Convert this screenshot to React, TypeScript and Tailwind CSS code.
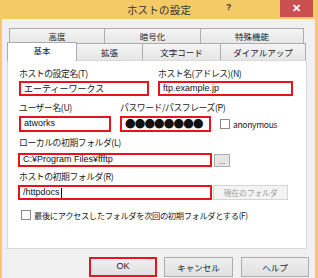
const jp = "font-['Meiryo_UI','Noto_Sans_CJK_JP',sans-serif]";

function Field({ children, className = "" }: { children?: React.ReactNode; className?: string }) {
  return (
    <div
      className={`border-2 border-[#e8141c] bg-white flex items-center pl-[3px] text-[9px] text-[#111] font-['Liberation_Sans','Noto_Sans_CJK_JP',sans-serif] ${className}`}
    >
      {children}
    </div>
  );
}

function Label({ children }: { children: React.ReactNode }) {
  return <div className="h-[12px] leading-[12px] text-[8.8px] tracking-[-0.4px] text-[#222]">{children}</div>;
}

function Checkbox() {
  return <div className="w-[10px] h-[10px] border border-[#8a8a8a] bg-white shrink-0" />;
}

export default function App() {
  return (
    <div className={`w-[318px] h-[278px] overflow-hidden bg-[#f3ca66] flex flex-col ${jp}`}>
      {/* title bar */}
      <div className="h-[19px] shrink-0 grid grid-cols-[1fr_auto_1fr]">
        <div />
        <div className="text-[10.5px] leading-[19px] text-[#333] tracking-[0.2px]">ホストの設定</div>
        <div className="flex justify-end items-start pr-[5px]">
          <div className="w-[8px] mt-[2px] text-[9px] leading-[10px] font-bold text-[#333] font-['Liberation_Sans',sans-serif]">?</div>
          <div className="w-[46px]" />
          <div className="w-[33px] h-[17px] bg-[#c9504f] flex items-center justify-center text-white text-[11px] font-bold font-['Liberation_Sans',sans-serif]">
            ✕
          </div>
        </div>
      </div>

      {/* client area */}
      <div className="flex-1 ml-[2px] mr-[3px] bg-[#f0f0f0] pt-[9px] pl-[5px] text-[#222]">
        {/* back tab row */}
        <div className="flex ml-[2px] h-[15px] text-[8.5px]">
          {[
            ["高度", "w-[96px]"],
            ["暗号化", "w-[97px]"],
            ["特殊機能", "w-[104px]"],
          ].map(([t, w]) => (
            <div
              key={t}
              className={`${w} h-[15px] border-t border-l border-r border-[#acacac] -mr-px bg-gradient-to-b from-[#f4f4f4] to-[#e6e6e6] flex items-center justify-center leading-none`}
            >
              {t}
            </div>
          ))}
        </div>
        {/* front tab row */}
        <div className="flex items-end h-[17px] text-[8.5px] relative z-10">
          <div className="w-[70px] h-[19px] -mb-px bg-white border-t border-l border-r border-[#acacac] flex items-start pt-[3px] justify-center leading-none">
            基本
          </div>
          {[
            ["拡張", "w-[66px]"],
            ["文字コード", "w-[78px]"],
            ["ダイアルアップ", "w-[85px]"],
          ].map(([t, w]) => (
            <div
              key={t}
              className={`${w} h-[17px] border-t border-r border-[#acacac] bg-gradient-to-b from-[#f4f4f4] to-[#e6e6e6] flex items-center justify-center leading-none`}
            >
              {t}
            </div>
          ))}
        </div>

        {/* panel */}
        <div className="w-[300px] h-[189px] border border-[#d9d9d9] bg-white pl-[11px] pt-[7px]">
          <div className="flex">
            <div className="w-[139px]">
              <Label>ホストの設定名(T)</Label>
              <Field className="w-[130px] h-[15px] mt-[1px] text-[8.5px] font-['Noto_Sans_CJK_JP',sans-serif]">エーティーワークス</Field>
            </div>
            <div className="mt-0">
              <Label>ホスト名(アドレス)(N)</Label>
              <Field className="w-[135px] h-[15px] mt-[1px]">ftp.example.jp</Field>
            </div>
          </div>

          <div className="flex mt-[6px]">
            <div className="w-[101px]">
              <Label>ユーザー名(U)</Label>
              <Field className="w-[92px] h-[16px] mt-[2px]">atworks</Field>
            </div>
            <div>
              <Label>パスワード/パスフレーズ(P)</Label>
              <div className="flex items-center mt-[2px]">
                <Field className="w-[91px] h-[16px] text-[10.5px] leading-none tracking-[-0.8px] font-['Noto_Sans_CJK_JP',sans-serif]">
                  ●●●●●●●●
                </Field>
                <div className="ml-[9px] flex items-center gap-[3px]">
                  <Checkbox />
                  <span className="text-[8.5px] tracking-[-0.3px]">anonymous</span>
                </div>
              </div>
            </div>
          </div>

          <div className="mt-[5px]">
            <Label>ローカルの初期フォルダ(L)</Label>
            <div className="flex items-center mt-[4px] -ml-px">
              <Field className="w-[194px] h-[14px]">C:¥Program Files¥ffftp</Field>
              <div className="ml-[2px] w-[16px] h-[13px] border border-[#adadad] bg-[#e5e5e5] flex items-end justify-center text-[8px] leading-[8px] text-[#333] font-['Liberation_Sans',sans-serif]">
                ...
              </div>
            </div>
          </div>

          <div className="mt-[4px]">
            <Label>ホストの初期フォルダ(R)</Label>
            <div className="flex items-center mt-[2px] -ml-px">
              <Field className="w-[194px] h-[15px]">
                /httpdocs<span className="ml-px inline-block w-px h-[10px] bg-[#111]" />
              </Field>
              <div className="ml-[1px] w-[75px] h-[15px] border border-[#d5d5d5] bg-[#f4f4f4] flex items-center justify-center text-[8px] tracking-[-0.3px] text-[#9c9c9c]">
                現在のフォルダ
              </div>
            </div>
          </div>

          <div className="flex items-center gap-[3px] mt-[9px] ml-[2px]">
            <Checkbox />
            <span className="text-[8.3px] tracking-[-0.4px]">最後にアクセスしたフォルダを次回の初期フォルダとする(F)</span>
          </div>
        </div>

        {/* bottom buttons */}
        <div className="flex mt-[8px] pl-[82px] gap-[7px] text-[8.5px]">
          <div className="w-[68px] h-[20px] border-2 border-[#e8141c] bg-gradient-to-b from-[#efefef] to-[#e0e0e0] flex items-center justify-center font-['Liberation_Sans',sans-serif] text-[9px]">
            OK
          </div>
          <div className="w-[69px] h-[20px] border border-[#adadad] bg-gradient-to-b from-[#efefef] to-[#e0e0e0] flex items-center justify-center">
            キャンセル
          </div>
          <div className="ml-px w-[68px] h-[20px] border border-[#adadad] bg-gradient-to-b from-[#efefef] to-[#e0e0e0] flex items-center justify-center">
            ヘルプ
          </div>
        </div>
      </div>
    </div>
  );
}
